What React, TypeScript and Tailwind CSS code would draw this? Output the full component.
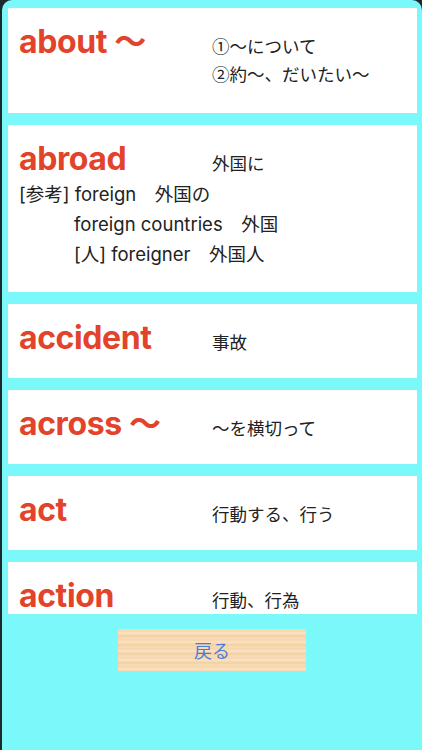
import React from 'react';

type Entry = {
  word: string;
  meaning: string[];
  extra?: { text: string; indent?: boolean }[];
  height: string;
};

const entries: Entry[] = [
  { word: 'about ～', meaning: ['①～について', '②約～、だいたい～'], height: 'h-[105px]' },
  {
    word: 'abroad',
    meaning: ['外国に'],
    extra: [
      { text: '[参考] foreign　外国の' },
      { text: 'foreign countries　外国', indent: true },
      { text: '[人] foreigner　外国人', indent: true },
    ],
    height: 'h-[167px]',
  },
  { word: 'accident', meaning: ['事故'], height: 'h-[74px]' },
  { word: 'across ～', meaning: ['～を横切って'], height: 'h-[74px]' },
  { word: 'act', meaning: ['行動する、行う'], height: 'h-[74px]' },
  { word: 'action', meaning: ['行動、行為'], height: 'h-[74px]' },
];

const WordCard = ({ entry }: { entry: Entry }) => (
  <div className={`${entry.height} shrink-0 bg-white px-[11px] pt-[16px]`}>
    <div className="flex items-start">
      <div className="w-[193px] shrink-0 text-[32px] leading-[36px] font-bold text-[#e2432a] [font-family:Inter,'Noto_Sans_CJK_JP',sans-serif] tracking-[-0.4px]">
        {entry.word}
      </div>
      <div className="mt-[8px] text-[17.5px] leading-[28px] text-[#222] [font-family:'Noto_Sans_CJK_JP',sans-serif]">
        {entry.meaning.map((m) => (
          <div key={m}>{m}</div>
        ))}
      </div>
    </div>
    {entry.extra && (
      <div className="mt-[2px] text-[18.5px] leading-[30px] text-[#222]">
        {entry.extra.map((e) => (
          <div key={e.text} className={e.indent ? 'pl-[55px]' : ''}>
            {e.text}
          </div>
        ))}
      </div>
    )}
  </div>
);

export default function App() {
  return (
    <div className="h-[750px] w-[422px] bg-[#1c2a2c] [font-family:Inter,'Noto_Sans_CJK_JP',sans-serif]">
      <div className="ml-[2px] flex h-full flex-col rounded-t-[10px] bg-[#7af8fa]">
        <div className="flex h-[614px] flex-col gap-[12px] overflow-hidden pt-[8px] pl-[6px] pr-[5px]">
          {entries.map((e) => (
            <WordCard key={e.word} entry={e} />
          ))}
        </div>
        <div className="mt-[15px] flex justify-center">
          <button className="h-[42px] w-[188px] bg-[repeating-linear-gradient(180deg,#f8dcb6_0px,#f5d6ac_2px,#faE4c6_4px,#f3cf9f_7px,#f8ddb8_9px)] text-[18px] text-[#4a7bd8] [font-family:'Noto_Sans_CJK_JP',sans-serif]">
            戻る
          </button>
        </div>
      </div>
    </div>
  );
}
